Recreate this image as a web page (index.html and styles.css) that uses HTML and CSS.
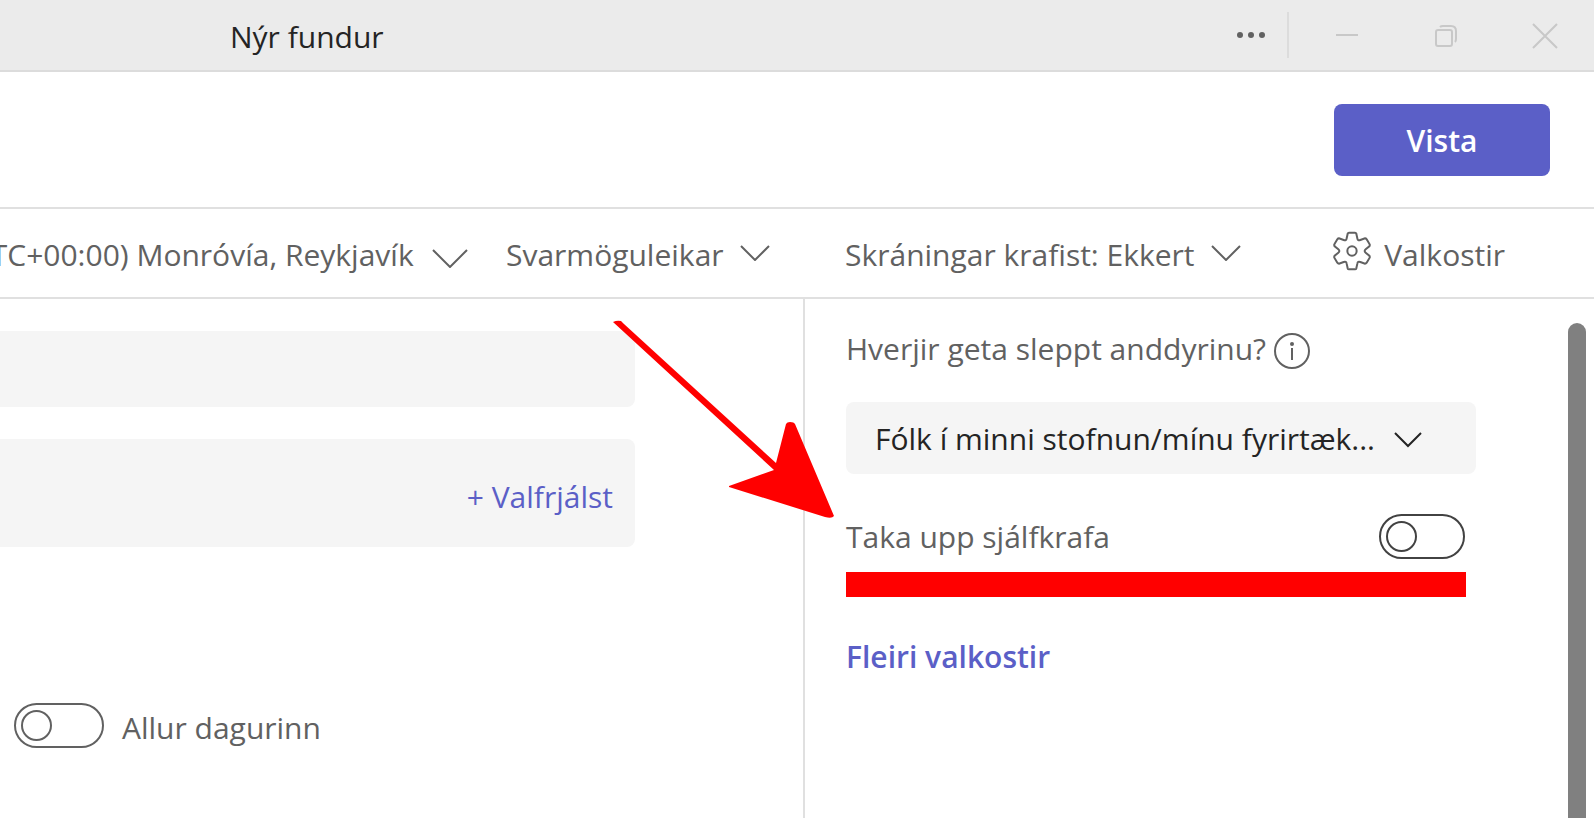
FILE: index.html
```html
<!DOCTYPE html>
<html lang="is">
<head>
  <meta charset="UTF-8" />
  <meta name="viewport" content="width=device-width, initial-scale=1.0"/>
  <title>Nýr fundur</title>
  <link rel="stylesheet" href="styles.css">
</head>
<body>
  <header class="titlebar">
    <h1>Nýr fundur</h1>
    <div class="window-controls">
      <button class="more-btn" aria-label="Meira">
        <svg width="30" height="8" viewBox="0 0 30 8"><circle cx="4" cy="4" r="3"/><circle cx="15" cy="4" r="3"/><circle cx="26" cy="4" r="3"/></svg>
      </button>
      <button class="win-btn" aria-label="Minnka">
        <svg width="24" height="24" viewBox="0 0 24 24"><path d="M1 11h22"/></svg>
      </button>
      <button class="win-btn" aria-label="Endurheimta">
        <svg width="24" height="24" viewBox="0 0 24 24"><rect x="2" y="6" width="16" height="16" rx="2"/><path d="M6 3q1-1 3-1h8q5 0 5 5v8q0 2-1 3"/></svg>
      </button>
      <button class="win-btn" aria-label="Loka">
        <svg width="26" height="26" viewBox="0 0 26 26"><path d="M1 1l24 24M25 1L1 25"/></svg>
      </button>
    </div>
  </header>

  <div class="actions">
    <button class="save-btn">Vista</button>
  </div>

  <nav class="toolbar">
    <div class="toolbar-left">
      <div class="dropdown timezone">
        <select aria-label="Tímabelti"><option>(UTC+00:00) Monróvía, Reykjavík</option></select>
        <svg class="chevron" width="36" height="30" viewBox="0 0 36 30"><path d="M1 12l17 17L35 12"/></svg>
      </div>
      <div class="dropdown">
        <select aria-label="Svarmöguleikar"><option>Svarmöguleikar</option></select>
        <svg class="chevron" width="30" height="16" viewBox="0 0 30 16"><path d="M1 1l14 14L29 1"/></svg>
      </div>
    </div>
    <div class="toolbar-right">
      <div class="dropdown">
        <select aria-label="Skráning"><option>Skráningar krafist: Ekkert</option></select>
        <svg class="chevron" width="30" height="16" viewBox="0 0 30 16"><path d="M1 1l14 14L29 1"/></svg>
      </div>
      <button class="options-btn">
        <svg width="40" height="40" viewBox="-60 -60 120 120">
          <path d="M-16-38L-13-52Q-12-55-9-55H9Q12-55 13-52L16-38Q17-30 25-33L39-38Q42-38 44-35L53-20Q54-17 52-14L41-5Q35 0 41 5L52 14Q54 17 53 20L44 35Q42 38 39 38L25 33Q17 30 16 38L13 52Q12 55 9 55H-9Q-12 55-13 52L-16 38Q-17 30-25 33L-39 38Q-42 38-44 35L-53 20Q-54 17-52 14L-41 5Q-35 0-41-5L-52-14Q-54-17-53-20L-44-35Q-42-38-39-38L-25-33Q-17-30-16-38Z"/>
          <circle r="14"/>
        </svg>
        <span>Valkostir</span>
      </button>
    </div>
  </nav>

  <main class="content">
    <section class="form">
      <input class="field" type="text" aria-label="Titill">
      <div class="field attendees">
        <input type="text" aria-label="Þátttakendur">
        <button class="optional-btn">+ Valfrjálst</button>
      </div>
      <label class="all-day">
        <input class="toggle" type="checkbox">
        <span>Allur dagurinn</span>
      </label>
    </section>

    <aside class="side">
      <div class="settings">
        <div class="lobby-label">
          <label for="lobby">Hverjir geta sleppt anddyrinu?</label>
          <svg width="36" height="36" viewBox="0 0 36 36"><circle cx="18" cy="18" r="17"/><path d="M18 15v12"/><circle class="dot" cx="18" cy="11" r="2"/></svg>
        </div>
        <div class="lobby">
          <select id="lobby"><option>Fólk í minni stofnun/mínu fyrirtæk...</option></select>
          <svg class="chevron" width="28" height="16" viewBox="0 0 28 16"><path d="M1 1l13 13L27 1"/></svg>
        </div>
        <div class="record">
          <label for="record">Taka upp sjálfkrafa</label>
          <input class="toggle dark" type="checkbox" id="record">
        </div>
        <div class="marker"></div>
        <a class="more-link" href="#">Fleiri valkostir</a>
      </div>
      <div class="scrollbar"></div>
      <!-- arrow pointing at the recording setting -->
      <svg class="arrow" width="222" height="198" viewBox="0 0 222 198"><path d="M0 1Q4-1 8 0L11 3L163 142L173 103Q174 101 177 101Q181 101 182 103L221 195Q219 198 212 196L116 166V165L161 149Z"/></svg>
    </aside>
  </main>
</body>
</html>
```
FILE: styles.css
```css
*, *::before { margin: 0; padding: 0; box-sizing: border-box; }
body {
  font-family: 'Open Sans', 'Noto Sans', sans-serif;
  font-size: 30px;
  line-height: 40px;
  color: #616161;
  background: #fff;
  height: 100vh;
  display: flex;
  flex-direction: column;
  overflow: hidden;
}
button, select, input { font: inherit; color: inherit; background: none; border: none; }
button { cursor: pointer; }
select { appearance: none; cursor: pointer; }
svg { fill: none; stroke: currentColor; stroke-width: 2; flex-shrink: 0; }

.titlebar {
  display: flex;
  align-items: center;
  justify-content: space-between;
  height: 72px;
  padding-left: 230px;
  background: #ebebeb;
  border-bottom: 2px solid #dcdcdc;
}
h1 { padding-top: 4px; font-size: 30px; font-weight: 400; color: #242424; }
.window-controls { display: flex; align-items: center; }
.more-btn {
  display: flex;
  align-items: center;
  height: 46px;
  margin-right: 8px;
  padding: 0 21px;
  border-right: 2px solid #dcdcdc;
}
.more-btn svg { fill: #616161; stroke: none; }
.win-btn {
  display: flex;
  align-items: center;
  justify-content: center;
  width: 99px;
  height: 70px;
  padding-top: 2px;
  color: #c8c8c8;
}

.actions {
  display: flex;
  justify-content: flex-end;
  padding: 32px 44px 31px;
  border-bottom: 2px solid #e0e0e0;
}
.save-btn {
  width: 216px;
  height: 72px;
  padding-top: 2px;
  border-radius: 8px;
  background: #5b5fc7;
  color: #fff;
  font-weight: 600;
}

.toolbar, .content {
  display: grid;
  grid-template-columns: minmax(0, 1fr) 791px;
}
.toolbar { height: 90px; border-bottom: 2px solid #e0e0e0; }
.toolbar-left, .toolbar-right { display: flex; align-items: center; }
.toolbar-left { justify-content: flex-end; gap: 38px; padding-right: 33px; overflow: hidden; }
.toolbar-right { justify-content: space-between; padding: 0 89px 0 42px; }
.dropdown { position: relative; display: flex; align-items: center; flex-shrink: 0; }
.dropdown select { padding: 4px 46px 0 0; }
.dropdown.timezone select { padding-right: 54px; }
.chevron { position: absolute; right: 0; pointer-events: none; }
.options-btn { display: flex; align-items: flex-start; gap: 12px; }
.options-btn svg { stroke-width: 6; }
.options-btn span { padding-top: 4px; }

.content { flex: 1; min-height: 0; }
.form { padding: 32px 168px 0 0; }
.field {
  display: block;
  width: 100%;
  height: 76px;
  background: #f5f5f5;
  border-radius: 0 8px 8px 0;
}
.attendees {
  display: flex;
  align-items: center;
  height: 108px;
  margin-top: 32px;
  padding: 8px 22px 0 0;
}
.attendees input { flex: 1; min-width: 0; }
.optional-btn { color: #5b5fc7; }
.all-day { display: flex; align-items: center; gap: 18px; margin-top: 156px; padding-left: 14px; }
.all-day span { padding-top: 4px; }

.toggle {
  appearance: none;
  display: flex;
  align-items: center;
  width: 90px;
  height: 45px;
  padding-left: 5px;
  border: 2px solid #616161;
  border-radius: 23px;
  cursor: pointer;
}
.toggle::before {
  content: "";
  width: 31px;
  height: 31px;
  border: 2px solid #616161;
  border-radius: 50%;
}
.toggle.dark { width: 86px; }
.toggle.dark, .toggle.dark::before { border-color: #424242; }
.toggle:checked { justify-content: flex-end; padding: 0 5px; }

.side {
  position: relative;
  display: flex;
  justify-content: space-between;
  padding: 24px 8px 0 41px;
  border-left: 2px solid #e0e0e0;
}
.settings { width: 630px; padding-top: 8px; }
.lobby-label { display: flex; align-items: flex-end; gap: 8px; height: 40px; padding-bottom: 2px; }
.lobby-label .dot { fill: currentColor; stroke: none; }
.lobby {
  position: relative;
  display: flex;
  align-items: center;
  margin: 31px 0 40px;
  color: #242424;
}
.lobby select {
  width: 100%;
  height: 72px;
  padding: 2px 80px 0 29px;
  background: #f5f5f5;
  border-radius: 8px;
}
.lobby .chevron { right: 54px; margin-top: 3px; }
.record { display: flex; align-items: center; justify-content: space-between; padding-right: 11px; }
.marker { height: 25px; margin: 13px 10px 40px 0; background: #f00; }
.more-link { color: #5b5fc7; font-weight: 600; text-decoration: none; }
.scrollbar { width: 18px; background: #808080; border-radius: 9px 9px 0 0; }
.arrow {
  position: absolute;
  left: -192px;
  top: 22px;
  fill: #f00;
  stroke: none;
  overflow: visible;
  pointer-events: none;
}
```
